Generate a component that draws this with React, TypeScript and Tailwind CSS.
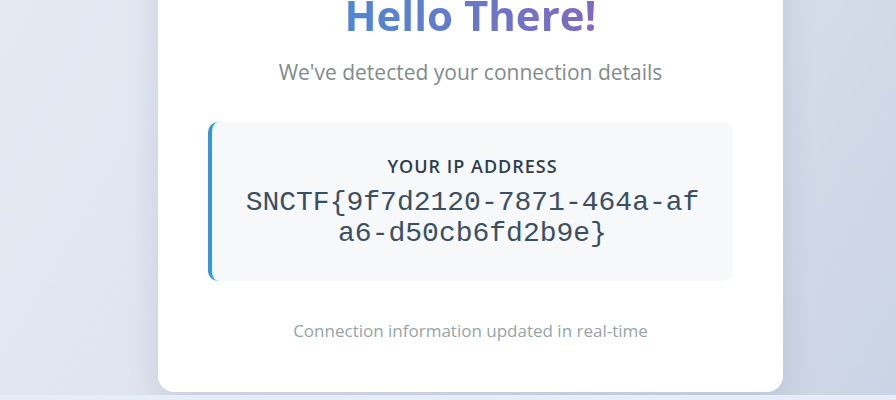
export default function App() {
  return (
    <div className="flex h-[400px] flex-col overflow-hidden font-['Open_Sans',sans-serif]">
      <main className="flex h-[395px] items-end justify-center overflow-hidden bg-[linear-gradient(120deg,#e5e9f2_0%,#dce2ed_50%,#cbd4e4_100%)] pb-[3px] pl-[45px]">
        <div className="w-[625px] shrink-0 rounded-2xl bg-white px-[50px] pb-[49px] pt-[43px] text-center shadow-[0_12px_32px_rgba(30,50,90,0.12)]">
          <h1 className="bg-[linear-gradient(90deg,#3498db,#9b59b6)] bg-clip-text text-[42px] font-bold leading-[56px] text-transparent">
            Hello There!
          </h1>
          <p className="mt-[15px] text-[21px] leading-[28px] text-[#7f8c8d]">
            We've detected your connection details
          </p>

          {/* IP box */}
          <div className="mt-[36px] rounded-[10px] border-l-4 border-[#3498db] bg-[#f6f8fa] px-[30px] pb-[32px] pt-[32px]">
            <div className="text-[18px] font-semibold uppercase leading-[24px] tracking-[1px] text-[#2c3e50]">
              Your IP Address
            </div>
            <div className="mt-[9px] break-all font-['Liberation_Mono',monospace] text-[28px] leading-[31px] text-[#3b4f63]">
              SNCTF{"{"}9f7d2120-7871-464a-afa6-d50cb6fd2b9e{"}"}
            </div>
          </div>

          <p className="mt-[38px] text-[17px] leading-[24px] text-[#95a5a6]">
            Connection information updated in real-time
          </p>
        </div>
      </main>
      <div className="h-[5px] bg-[#e6edf8]" />
    </div>
  );
}
